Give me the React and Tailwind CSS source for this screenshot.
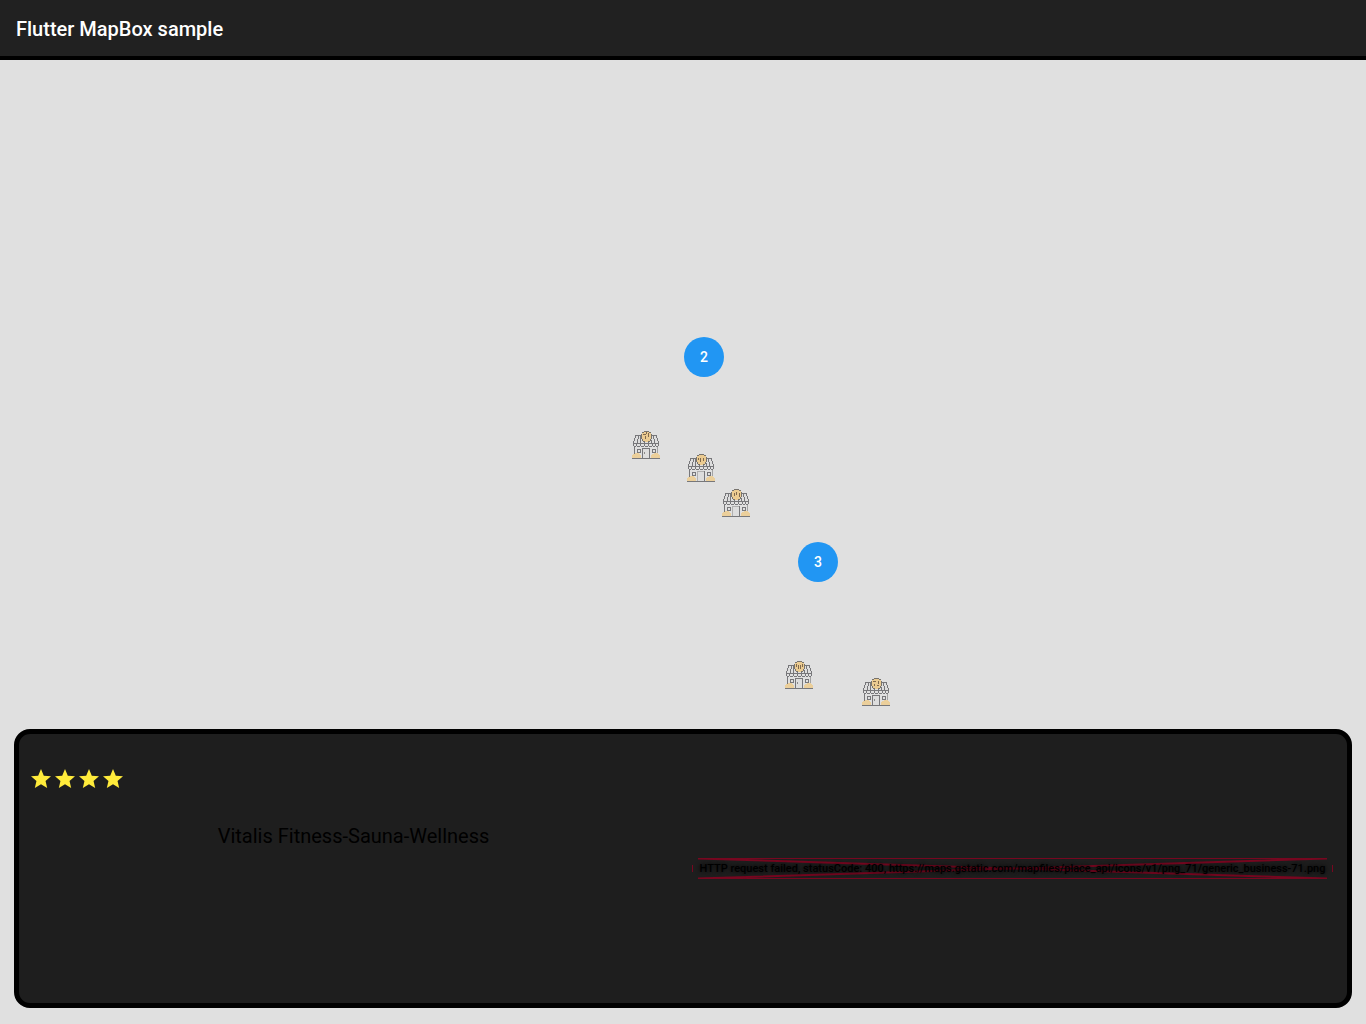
import React from "react";

const clusters = [
  { id: "north", dx: 1, dy: -205, count: 2 },
  { id: "south", dx: 115, dy: 0, count: 3 },
];

const shops = [
  { id: "a", dx: -51, dy: -111, knob: true, face: "M11 3.5H14M13.5 5V8M16.5 2V6M14.5 1V3" },
  { id: "b", dx: 4, dy: -88, light: true, face: "M11.5 4V6M13.5 4V8M16.5 4V7" },
  { id: "c", dx: 39, dy: -53, light: true, face: "M12.5 4V7M14.5 3V6M17.5 4V8" },
  { id: "d", dx: 102, dy: 119, knob: true, face: "M11.5 3V6M13.5 4V8M15.5 4V8M17.5 3V6" },
  { id: "e", dx: 179, dy: 136, knob: true, face: "M11 3.5H14M12.5 6V8M16.5 3V6M15 7.5H17" },
];

const offset = (item) => ({
  left: `calc(50% + ${item.dx}px)`,
  top: `calc(50% + ${item.dy}px)`,
});

function ShopIcon({ face, knob, light }) {
  return (
    <svg viewBox="0 0 28 28" className="block size-7" shapeRendering="crispEdges" aria-hidden="true">
      <path d="M4 4H24L27 13H1Z" fill="#dedede" />
      <g fill="none" stroke="#77777a" strokeWidth="1">
        <path d="M3 4.5H9M20 4.5H25M3.5 4V7M2.5 7V10M1.5 10V13M24.5 4V7M25.5 7V10M26.5 10V13" />
        <path d="M6.5 5V8M5.5 8V12M8.5 5V12M21.5 5V8M22.5 8V12M19.5 9V12M12.5 11V13M16.5 11V13" />
        <path d="M1 12.5H27M1.5 13V15M4.5 13V15M8.5 13V15M12.5 13V15M16.5 13V15M20.5 13V15M23.5 13V15M26.5 13V15" />
        <path d="M2 15.5H4M5 15.5H8M9 15.5H12M13 15.5H16M17 15.5H20M21 15.5H23M24 15.5H26" />
        <path d="M5.5 18.5H8.5V21.5H5.5ZM20.5 18.5H23.5V21.5H20.5Z" />
        <path d="M2.5 16V23" />
        <path d="M25.5 16V23" stroke="#a3a3a3" />
      </g>
      <path d="M10.5 27V17.5H17.5V27" fill="#dddddd" stroke="#77777a" />
      {light && <path d="M10.5 27V17.5H17" fill="none" stroke="#b0b0b0" />}
      {knob && <path d="M12 21h1v2h-1z" fill="#8a8a8a" />}
      <path d="M0 27V24H1V23H3V22H7V23H8V24H9V27ZM19 27V24H20V23H22V22H26V23H27V24H28V27Z" fill="#ebcf9b" />
      <path d="M0 27.5H28" stroke="#77777a" />
      <path d="M9 3H10V1H12V0H17V1H19V3H20V8H19V10H17V11H12V10H10V8H9Z" fill="#ebcb91" />
      <path d="M12 .5H17M10 1.5H12M17 1.5H19M9.5 3V8M19.5 3V8M10.5 8V10M18.5 8V10M11 10.5H13M16 10.5H18" stroke="#77736d" fill="none" />
      <path d={face} stroke="#80694d" fill="none" />
    </svg>
  );
}

function Star() {
  return (
    <svg viewBox="0 0 24 24" className="size-6" fill="#ffeb3b" aria-hidden="true">
      <path d="M12 17.27 18.18 21l-1.64-7.03L22 9.24l-7.19-.61L12 2 9.19 8.63 2 9.24l5.46 4.73L5.82 21z" />
    </svg>
  );
}

function ImageError() {
  return (
    <div className="relative flex h-[21px] w-full max-w-[641px] items-center justify-center">
      <svg
        viewBox="0 0 641 21"
        preserveAspectRatio="none"
        className="absolute inset-0 size-full"
        fill="none"
        stroke="#770720"
        aria-hidden="true"
      >
        <path d="M6 .5H635M6 20.5H635M.5 7V14M640.5 7V14" strokeWidth="1" />
        <path d="M6 .5 635 20.5M6 20.5 635 .5" strokeWidth="2" />
      </svg>
      <p className="relative whitespace-nowrap text-[11px] leading-4 font-medium text-black [text-shadow:0_0_4px_#000]">
        HTTP request failed, statusCode: 400, https://maps.gstatic.com/mapfiles/place_api/icons/v1/png_71/generic_business-71.png
      </p>
    </div>
  );
}

export default function App() {
  return (
    <div className="flex min-h-screen flex-col bg-[#e0e0e0] font-[Roboto,sans-serif]">
      <header className="flex h-[60px] items-center border-b-4 border-black bg-[#212121] px-4 pt-0.5">
        <h1 className="text-xl font-medium text-white">Flutter MapBox sample</h1>
      </header>
      <main className="relative flex flex-1 flex-col justify-end overflow-hidden px-[14px] pb-4">
        {clusters.map((item) => (
          <button
            key={item.id}
            type="button"
            aria-label={`${item.count} places`}
            style={offset(item)}
            className="absolute size-10 rounded-full bg-[#2196f3] text-sm font-medium text-white"
          >
            {item.count}
          </button>
        ))}
        {shops.map((item) => (
          <button key={item.id} type="button" aria-label="Shop" style={offset(item)} className="absolute">
            <ShopIcon {...item} />
          </button>
        ))}
        <section className="relative flex min-h-[279px] flex-col rounded-2xl border-5 border-black bg-[#1e1e1e] px-[5px] pt-[33px]">
          <div className="flex px-[5px]" role="img" aria-label="4 stars">
            <Star />
            <Star />
            <Star />
            <Star />
          </div>
          <div className="grid grid-cols-2 pt-[31px] text-center">
            <h2 className="text-xl leading-7 text-black">Vitalis Fitness-Sauna-Wellness</h2>
            <div className="flex justify-center pt-9">
              <ImageError />
            </div>
          </div>
        </section>
      </main>
    </div>
  );
}
